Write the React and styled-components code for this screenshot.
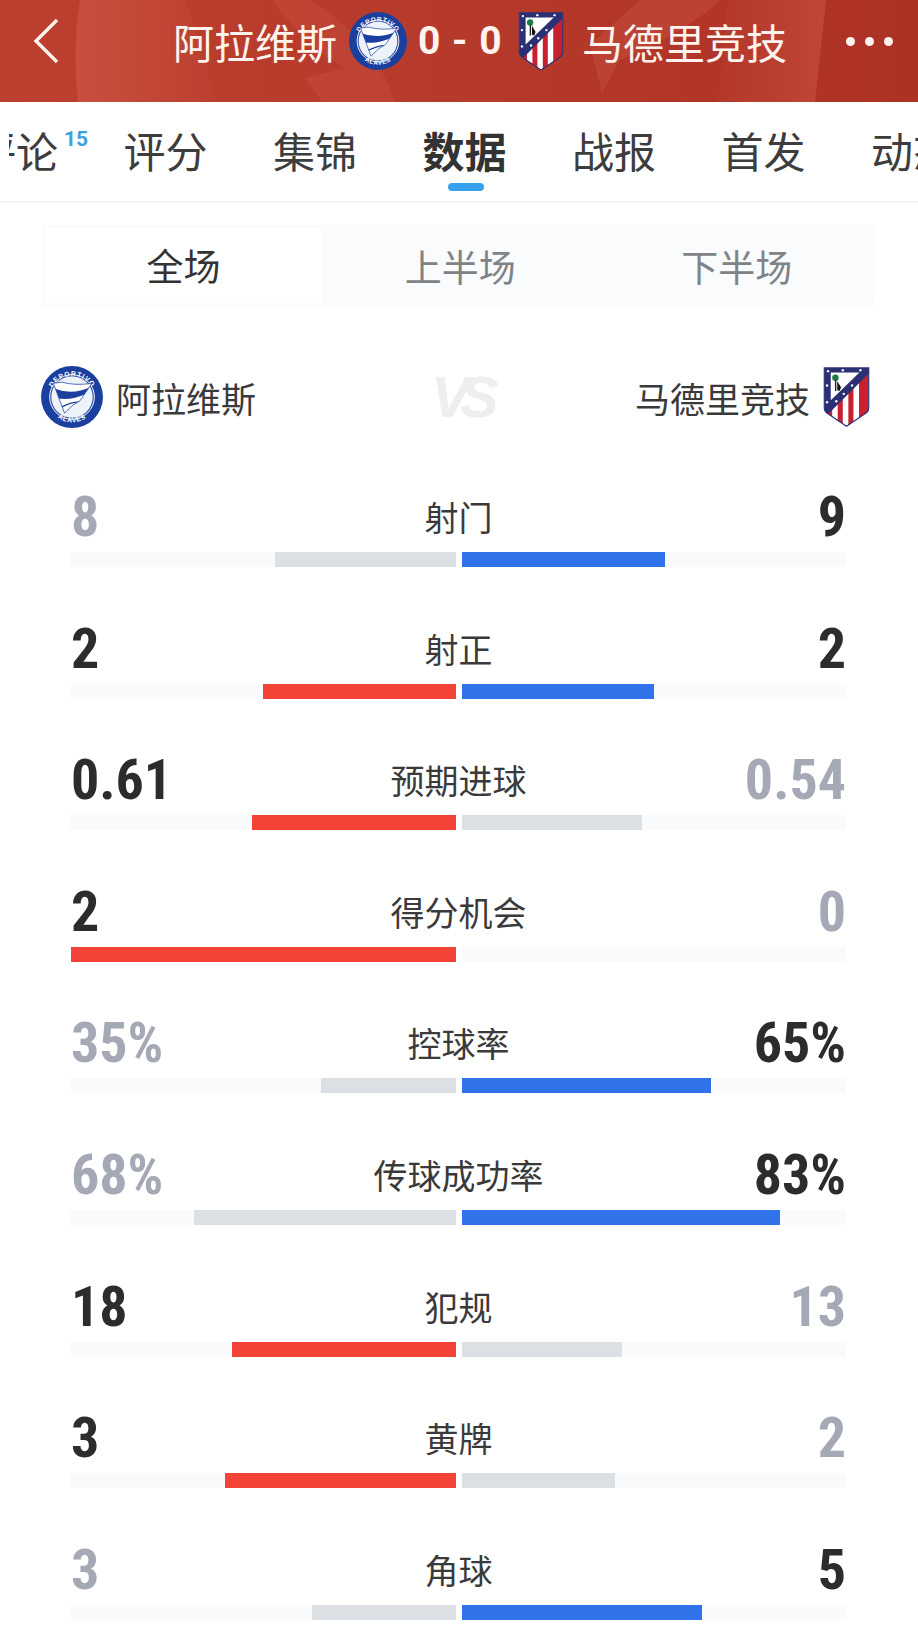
import React from "react";
import styled, { createGlobalStyle } from "styled-components";

const Global = createGlobalStyle`
  html, body { margin: 0; padding: 0; background: #fff; }
  body { font-family: "Noto Sans CJK SC", "Noto Sans", sans-serif; }
`;
const Page = styled.div`
  width: 918px; height: 1651px; overflow: hidden; background: #fff; color: #333;
  font-family: "Noto Sans CJK SC", "Noto Sans", sans-serif;
`;
const Header = styled.header`
  position: relative; height: 102px; display: flex; align-items: center;
  padding: 0 25px 0 33px; box-sizing: border-box; overflow: hidden;
  background: linear-gradient(90deg, #bc3f2f 0%, #b63a2b 50%, #ad3226 100%);
  color: #fff3ee;
`;
const HeaderArt = styled.svg`
  position: absolute; inset: 0; width: 100%; height: 100%;
`;
const Back = styled.svg`
  position: relative; width: 26px; height: 46px; flex: none; margin-top: -20px;
`;
const Match = styled.div`
  position: relative; display: flex; align-items: center; margin-left: 114px; margin-top: -20px; flex: none;
`;
const HeaderTeam = styled.span`
  font-size: 41px; line-height: 60px; white-space: nowrap; font-weight: 400;
`;
const Score = styled.span`
  font-family: "Roboto", "Liberation Sans", sans-serif; font-weight: 700; font-size: 39px;
  width: 83px; text-align: center; white-space: pre; letter-spacing: 1px;
`;
const HeaderBadgeA = styled.span`
  display: flex; margin: 0 11px 0 12px;
`;
const HeaderBadgeB = styled.span`
  display: flex; margin: 0 18px 0 17px;
`;
const Dots = styled.div`
  position: relative; margin-left: auto; margin-top: -20px; width: 47px; display: flex; justify-content: space-between;
`;
const Dot = styled.i`
  width: 9px; height: 9px; border-radius: 50%; background: #fff3ee; display: block;
`;
const Tabs = styled.nav`
  position: relative; height: 101px; box-sizing: border-box; border-bottom: 2px solid #f2f3f5;
  display: flex; gap: 65.5px; overflow: hidden; padding-left: 0; margin-bottom: 0;
`;
const TabFade = styled.i`
  position: absolute; left: 0; top: 0; bottom: 0; width: 9px; background: #fff;
`;
const Tab = styled.div`
  position: relative; flex: none; width: 84px; height: 99px; font-size: 42px; line-height: 96px; text-align: center;
  white-space: nowrap; color: ${p => (p.$active ? "#333" : "#3d3d3d")}; font-weight: ${p => (p.$active ? 700 : 400)};
  margin-left: ${p => p.$offset || 0}px;
  ${p => p.$active && `
    &::after { content: ""; position: absolute; left: 25px; top: 81px; width: 36px; height: 8px; border-radius: 4px; background: #38a1ee; }
  `}
`;
const Sup = styled.sup`
  position: absolute; left: 90px; top: 25px; font-family: "Liberation Sans Narrow", "Roboto", sans-serif;
  font-size: 21px; line-height: 24px; font-weight: 700; color: #3f9fe0;
`;
const Segment = styled.div`
  display: grid; grid-template-columns: 280px 1fr 1fr; align-items: stretch;
  margin: 22px 43px 0 42px; height: 82px; background: #f9fbfc; border-radius: 6px;
`;
const Seg = styled.div`
  display: flex; align-items: center; justify-content: center; font-size: 37px; line-height: 1;
  color: ${p => (p.$active ? "#333" : "#7f8386")};
  ${p => p.$active && `background: #fff; margin: 3px 0 4px 3px; border-radius: 4px;`}
`;
const Teams = styled.div`
  position: relative; display: flex; align-items: center; justify-content: space-between;
  margin: 58px 48px 0 41px; height: 64px;
`;
const Team = styled.div`
  display: flex; align-items: center; gap: 13px; font-size: 35px; line-height: 1; color: #3a3a3a;
`;
const Vs = styled.div`
  position: absolute; left: 384px; top: -1px; width: 70px; text-align: center; font-family: "Liberation Sans", sans-serif;
  font-weight: 700; font-style: italic; font-size: 58px; line-height: 66px; color: #eeeeef; letter-spacing: -10px;
`;
const Stats = styled.div`
  display: flex; flex-direction: column; gap: 53.6px; margin: 60px 72px 0 71px;
`;
const Row = styled.div`
  display: flex; flex-direction: column; gap: 7px; height: 78px;
`;
const Head = styled.div`
  display: grid; grid-template-columns: 1fr auto 1fr; align-items: center; height: 56px;
`;
const Value = styled.span`
  font-family: "Liberation Sans Narrow", "Roboto Condensed", "Liberation Sans", sans-serif;
  font-weight: 700; font-size: 56px; line-height: 56px; white-space: nowrap;
  text-align: ${p => p.$side}; color: ${p => (p.$win ? "#2c2c2e" : "#a5a9b5")};
`;
const Label = styled.span`
  font-size: 34px; line-height: 56px; color: #3a3a3a; white-space: nowrap;
`;
const Bars = styled.div`
  display: grid; grid-template-columns: 385px 384px; column-gap: 6px; height: 15px;
`;
const Track = styled.div`
  display: flex; background: #f9fafb; justify-content: ${p => (p.$left ? "flex-end" : "flex-start")};
`;
const Fill = styled.div`
  height: 100%; background: ${p => p.$color};
`;

const Alaves = ({ size }) => {
  const id = `arc${size}`;
  return (
    <svg width={size} height={size} viewBox="0 0 100 100">
      <defs>
        <path id={`${id}t`} d="M14 52 A36 36 0 0 1 86 52" />
        <path id={`${id}b`} d="M11 52 A39 39 0 0 0 89 52" />
        <clipPath id={`${id}c`}><path d="M20 28 L33 26 Q55 32 82 28 L63 56 Q50 62 38 76 Z" /></clipPath>
      </defs>
      <circle cx="50" cy="50" r="50" fill="#1a3f9e" />
      <circle cx="50" cy="50" r="34" fill="#eef3fa" stroke="#1a3f9e" strokeWidth="1" />
      <circle cx="50" cy="50" r="36" fill="none" stroke="#fff" strokeWidth="1.6" />
      <text fontFamily="Liberation Sans, sans-serif" fontSize="11" fontWeight="700" fill="#fff" letterSpacing="1.4">
        <textPath href={`#${id}t`} startOffset="50%" textAnchor="middle">DEPORTIVO</textPath>
      </text>
      <text fontFamily="Liberation Sans, sans-serif" fontSize="11" fontWeight="700" fill="#fff" letterSpacing="1">
        <textPath href={`#${id}b`} startOffset="50%" textAnchor="middle">ALAVES</textPath>
      </text>
      <g clipPath={`url(#${id}c)`}>
        <rect width="100" height="100" fill="#fff" />
        <path d="M20 36 Q50 48 80 34 L72 45 Q48 56 26 52 Z" fill="#1a3f9e" />
        <path d="M30 68 Q48 58 62 58" fill="none" stroke="#1a3f9e" strokeWidth="2" />
      </g>
      <path d="M20 28 L33 26 Q55 32 82 28 L63 56 Q50 62 38 76 Z" fill="none" stroke="#1a3f9e" strokeWidth="1.2" />
    </svg>
  );
};

const Atletico = ({ width }) => {
  const id = `sh${width}`;
  const shield = "M2 2 H98 V88 Q98 96 90 101 L50 128 L10 101 Q2 96 2 88 Z";
  return (
    <svg width={width} height={width * 1.28} viewBox="0 0 100 130">
      <defs><clipPath id={id}><path d={shield} /></clipPath></defs>
      <g clipPath={`url(#${id})`}>
        <rect width="100" height="130" fill="#fff" />
        <rect x="8" y="0" width="11" height="130" fill="#c8202f" />
        <rect x="31" y="0" width="11" height="130" fill="#c8202f" />
        <rect x="54" y="0" width="11" height="130" fill="#c8202f" />
        <rect x="77" y="0" width="23" height="130" fill="#c8202f" />
        <path d="M0 0 H100 L0 100 Z" fill="#fff" />
        <path d="M0 0 H100 V12 L0 112 V0 Z" fill="#2b2f74" />
        <path d="M16 12 H78 L16 72 Z" fill="#fff" />
        <circle cx="26" cy="23" r="7" fill="#1d7a4b" />
        <rect x="25" y="28" width="3" height="24" fill="#222" />
        <path d="M30 30 L38 44 L35 52 L30 50 Z" fill="#111" />
        <g fill="#fff">
          <circle cx="10" cy="9" r="2.6" /><circle cx="42" cy="7" r="2.6" /><circle cx="80" cy="7" r="2.6" />
          <circle cx="8" cy="40" r="2.6" /><circle cx="8" cy="76" r="2.6" />
          <circle cx="62" cy="40" r="2.6" /><circle cx="44" cy="58" r="2.6" /><circle cx="28" cy="74" r="2.6" />
        </g>
      </g>
      <path d={shield} fill="none" stroke="#2b2f74" strokeWidth="2.5" />
    </svg>
  );
};

const RED = "#f44336", BLUE = "#2f72ea", GREY = "#dcdfe3";
const stats = [
  ["8", "射门", "9", 181, 203, "r"],
  ["2", "射正", "2", 193, 192, "b"],
  ["0.61", "预期进球", "0.54", 204, 180, "l"],
  ["2", "得分机会", "0", 385, 0, "l"],
  ["35%", "控球率", "65%", 135, 249, "r"],
  ["68%", "传球成功率", "83%", 262, 318, "r"],
  ["18", "犯规", "13", 224, 160, "l"],
  ["3", "黄牌", "2", 231, 153, "l"],
  ["3", "角球", "5", 144, 240, "r"],
];

export default function App() {
  return (
    <Page>
      <Global />
      <Header>
        <HeaderArt viewBox="0 0 918 102" preserveAspectRatio="none">
          <defs>
            <linearGradient id="g1" x1="0" x2="1"><stop offset="0" stopColor="#c84f3f" /><stop offset="1" stopColor="#c84f3f" stopOpacity="0.15" /></linearGradient>
            <linearGradient id="g2" x1="0" x2="1"><stop offset="0" stopColor="#c24a3a" stopOpacity="0.2" /><stop offset="1" stopColor="#c54e3d" /></linearGradient>
          </defs>
          <path d="M80 0 H185 Q205 50 215 102 H78 Q72 50 80 0 Z" fill="url(#g1)" />
          <path d="M272 0 H310 Q375 40 395 102 H322 L305 78 L345 68 Q310 50 272 0 Z" fill="#c14737" opacity=".75" />
          <path d="M590 45 L640 0 H720 Q690 30 620 60 L602 92 Z" fill="#c14a3a" opacity=".65" />
          <path d="M728 0 H826 L815 102 H718 Q722 50 728 0 Z" fill="url(#g2)" opacity=".75" />
        </HeaderArt>
        <Back viewBox="0 0 26 46">
          <path d="M24 2 L3 23 L24 44" fill="none" stroke="#fff3ee" strokeWidth="3.4" />
        </Back>
        <Match>
          <HeaderTeam>阿拉维斯</HeaderTeam>
          <HeaderBadgeA><Alaves size={58} /></HeaderBadgeA>
          <Score>0 - 0</Score>
          <HeaderBadgeB><Atletico width={46} /></HeaderBadgeB>
          <HeaderTeam>马德里竞技</HeaderTeam>
        </Match>
        <Dots><Dot /><Dot /><Dot /></Dots>
      </Header>
      <Tabs>
        <Tab $offset={-26}>评论<Sup>15</Sup></Tab>
        <Tab>评分</Tab>
        <Tab>集锦</Tab>
        <Tab $active>数据</Tab>
        <Tab>战报</Tab>
        <Tab>首发</Tab>
        <Tab>动态</Tab>
        <TabFade />
      </Tabs>
      <Segment>
        <Seg $active>全场</Seg>
        <Seg>上半场</Seg>
        <Seg>下半场</Seg>
      </Segment>
      <Teams>
        <Team><Alaves size={62} />阿拉维斯</Team>
        <Vs>VS</Vs>
        <Team>马德里竞技<Atletico width={47} /></Team>
      </Teams>
      <Stats>
        {stats.map(([l, name, r, lw, rw, win]) => (
          <Row key={name}>
            <Head>
              <Value $side="left" $win={win === "l" || win === "b"}>{l}</Value>
              <Label>{name}</Label>
              <Value $side="right" $win={win === "r" || win === "b"}>{r}</Value>
            </Head>
            <Bars>
              <Track $left><Fill $color={win === "r" ? GREY : RED} style={{ width: lw }} /></Track>
              <Track><Fill $color={win === "l" ? GREY : BLUE} style={{ width: rw }} /></Track>
            </Bars>
          </Row>
        ))}
      </Stats>
    </Page>
  );
}
